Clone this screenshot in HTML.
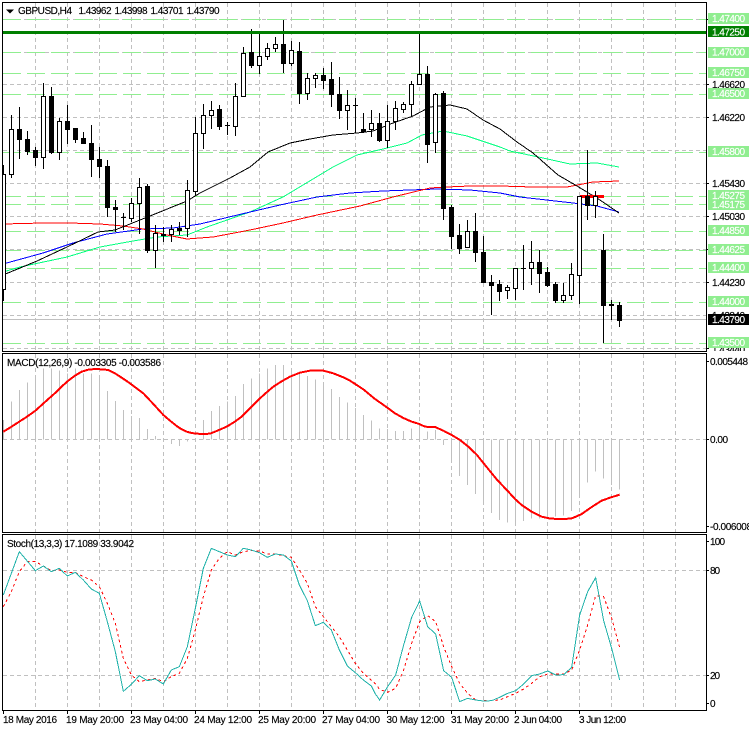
<!DOCTYPE html>
<html><head><meta charset="utf-8"><style>
html,body{margin:0;padding:0;background:#fff;width:749px;height:731px;overflow:hidden}
svg{display:block}
text{font-family:"Liberation Sans",sans-serif;font-size:10px;fill:#000;stroke:#000;stroke-width:.15px}
text.w{fill:#fff;stroke:#fff}
</style></head><body>
<svg width="749" height="731" viewBox="0 0 749 731" xmlns="http://www.w3.org/2000/svg">
<defs>
<clipPath id="m"><rect x="3" y="3" width="703" height="348"/></clipPath>
<clipPath id="ax"><rect x="707" y="3" width="42" height="348"/></clipPath>
</defs>
<rect width="749" height="731" fill="#fff"/>

<!-- grid -->
<g stroke="#c0c0c0" fill="none" stroke-dasharray="4 3" shape-rendering="crispEdges">
<path d="M35.5 3V351M67.5 3V351M99.5 3V351M131.5 3V351M163.5 3V351M195.5 3V351M227.5 3V351M259.5 3V351M291.5 3V351M323.5 3V351M355.5 3V351M387.5 3V351M419.5 3V351M451.5 3V351M483.5 3V351M515.5 3V351M547.5 3V351M579.5 3V351M611.5 3V351M643.5 3V351M675.5 3V351"/>
<path d="M35.5 354V532M67.5 354V532M99.5 354V532M131.5 354V532M163.5 354V532M195.5 354V532M227.5 354V532M259.5 354V532M291.5 354V532M323.5 354V532M355.5 354V532M387.5 354V532M419.5 354V532M451.5 354V532M483.5 354V532M515.5 354V532M547.5 354V532M579.5 354V532M611.5 354V532M643.5 354V532M675.5 354V532"/>
<path d="M35.5 535V710M67.5 535V710M99.5 535V710M131.5 535V710M163.5 535V710M195.5 535V710M227.5 535V710M259.5 535V710M291.5 535V710M323.5 535V710M355.5 535V710M387.5 535V710M419.5 535V710M451.5 535V710M483.5 535V710M515.5 535V710M547.5 535V710M579.5 535V710M611.5 535V710M643.5 535V710M675.5 535V710"/>
<path d="M3 19.5H706M3 52.5H706M3 84.5H706M3 117.5H706M3 150.5H706M3 183.5H706M3 216.5H706M3 249.5H706M3 282.5H706M3 315.5H706M3 348.5H706"/>
<path d="M3 439.5H706M3 570.5H706M3 675.5H706"/>
</g>

<g clip-path="url(#m)">
<!-- horizontal levels -->
<g stroke="#90ee90" fill="none" stroke-dasharray="18 6" shape-rendering="crispEdges">
<path d="M3 19.5H706M3 52.5H706M3 73.5H706M3 94.5H706M3 152.5H706M3 196.5H706M3 204.5H706M3 231.5H706M3 250.5H706M3 268.5H706M3 302.5H706M3 343.5H706"/>
</g>
<path d="M3 319.5H706" stroke="#c0c0c0" fill="none" shape-rendering="crispEdges"/>

<!-- moving averages -->
<g fill="none" shape-rendering="crispEdges">
<polyline stroke="#00ff7f" stroke-width="1" points="3,272 20,267 67,257 100,247 133,241 157,237 187,235 207,227 250,212 283,197 313,179 333,167 357,155 383,149 407,143 422,135 443,131 467,136 500,147 510,151 543,158 570,164 597,163 619,167"/>
<polyline stroke="#0000ff" stroke-width="1" points="3,264 43,253 73,243 107,234 143,229 173,228 200,224 250,212 280,205 317,197 350,193 383,191 437,189 470,190 500,193 520,197 573,203 597,206 619,212"/>
<polyline stroke="#ff0000" stroke-width="1" points="3,224 43,223 70,223 100,224 123,226 143,229 167,235 187,239 213,237 250,230 283,223 317,215 360,206 393,197 430,188 447,187 470,186 500,186 533,187 567,187 593,182 619,181"/>
<polyline stroke="#000" stroke-width="1" points="3,275 37,261 67,247 98,232 115,230 150,216 187,201 200,193 230,178 250,167 268,152 290,143 310,139 333,135 357,133 373,131 393,123 413,116 430,107 450,105 467,109 483,120 500,129 517,142 533,153 558,175 577,186 600,200 619,213"/>
<path d="M580 196.5H604" stroke="#ff0000" stroke-width="3"/>
</g>

<!-- candles: wicks -->
<path shape-rendering="crispEdges" stroke="#000" fill="none" d="M3.5 165V301M11.5 115V178M19.5 107V159M27.5 131V155M35.5 147V166M43.5 83V169M51.5 87V154M59.5 118V160M67.5 105V144M75.5 128V143M83.5 132V144M91.5 125V177M99.5 147V178M107.5 160V217M115.5 200V232M123.5 213V230M131.5 198V222M139.5 178V234M147.5 184V253M155.5 225V268M163.5 227V242M171.5 225V242M179.5 222V235M187.5 180V237M195.5 117V196M203.5 104V149M211.5 101V129M219.5 105V130M227.5 122V135M235.5 83V136M243.5 47V97M251.5 29V68M259.5 32V74M267.5 43V60M275.5 37V52M283.5 20V73M291.5 41V66M299.5 42V104M307.5 73V100M315.5 73V88M323.5 68V89M331.5 62V107M339.5 77V119M347.5 90V130M355.5 98V133M363.5 113V133M371.5 110V137M379.5 113V142M387.5 105V148M395.5 101V130M403.5 102V113M411.5 81V117M419.5 33V84M427.5 66V163M435.5 93V153M443.5 91V220M451.5 205V249M459.5 224V254M467.5 220V248M475.5 213V262M483.5 236V283M491.5 275V315M499.5 280V301M507.5 285V299M515.5 268V300M523.5 245V290M531.5 241V285M539.5 250V293M547.5 267V287M555.5 282V303M563.5 283V303M571.5 263V300M579.5 196V304M587.5 150V220M595.5 191V218M603.5 234V343M611.5 300V320M619.5 302V327"/>
<!-- white bodies -->
<path shape-rendering="crispEdges" stroke="#000" fill="#fff" d="M1.5 174.5h4v115h-4zM9.5 129.5h4v45h-4zM41.5 96.5h4v61h-4zM57.5 121.5h4v31h-4zM129.5 203.5h4v15h-4zM137.5 187.5h4v16h-4zM153.5 233.5h4v17h-4zM169.5 229.5h4v5h-4zM185.5 190.5h4v38h-4zM193.5 133.5h4v58h-4zM201.5 115.5h4v18h-4zM209.5 110.5h4v5h-4zM233.5 96.5h4v30h-4zM241.5 53.5h4v43h-4zM257.5 56.5h4v9h-4zM265.5 48.5h4v8h-4zM273.5 44.5h4v4h-4zM289.5 50.5h4v13h-4zM305.5 78.5h4v15h-4zM313.5 75.5h4v3h-4zM345.5 105.5h4v5h-4zM369.5 123.5h4v6h-4zM385.5 121.5h4v19h-4zM393.5 108.5h4v13h-4zM401.5 104.5h4v5h-4zM409.5 84.5h4v20h-4zM417.5 74.5h4v10h-4zM433.5 94.5h4v48h-4zM465.5 231.5h4v16h-4zM505.5 287.5h4v3h-4zM513.5 268.5h4v20h-4zM529.5 262.5h4v6h-4zM561.5 295.5h4v5h-4zM569.5 274.5h4v21h-4zM577.5 196.5h4v79h-4zM593.5 196.5h4v9h-4z"/>
<!-- black bodies -->
<path shape-rendering="crispEdges" fill="#000" d="M17 129h5v11h-5zM25 139h5v13h-5zM33 150h5v8h-5zM49 96h5v57h-5zM65 121h5v9h-5zM73 128h5v12h-5zM81 138h5v6h-5zM89 143h5v17h-5zM97 159h5v8h-5zM105 166h5v42h-5zM113 207h5v3h-5zM121 217h5v1h-5zM145 186h5v65h-5zM161 234h5v2h-5zM177 228h5v3h-5zM217 109h5v18h-5zM225 125h5v1h-5zM249 52h5v14h-5zM281 44h5v20h-5zM297 51h5v43h-5zM321 75h5v6h-5zM329 79h5v16h-5zM337 94h5v17h-5zM353 105h5v1h-5zM361 129h5v3h-5zM377 123h5v18h-5zM425 74h5v71h-5zM441 93h5v116h-5zM449 207h5v30h-5zM457 235h5v14h-5zM473 231h5v22h-5zM481 252h5v31h-5zM489 282h5v4h-5zM497 284h5v8h-5zM521 268h5v1h-5zM537 262h5v12h-5zM545 272h5v14h-5zM553 284h5v17h-5zM585 196h5v10h-5zM601 250h5v56h-5zM609 304h5v2h-5zM617 305h5v16h-5z"/>
<rect x="3" y="31" width="703" height="3" fill="#007f00"/>
</g>

<!-- MACD histogram + signal -->
<g transform="translate(0,350) scale(.33333)" fill="none" shape-rendering="crispEdges">
<path stroke="#c0c0c0" stroke-width="3" d="M10.5 268V210M34.5 268V155M58.5 268V120M82.5 268V98M106.5 268V75M130.5 268V55M154.5 268V55M178.5 268V62M202.5 268V70M226.5 268V55M250.5 268V70M274.5 268V70M298.5 268V85M322.5 268V123M346.5 268V153M370.5 268V180M394.5 268V198M418.5 268V204M442.5 268V237M466.5 268V258M490.5 268V265M514.5 268V282M538.5 268V288M562.5 268V275M586.5 268V266M610.5 268V210M634.5 268V183M658.5 268V168M682.5 268V155M706.5 268V138M730.5 268V102M754.5 268V85M778.5 268V70M802.5 268V55M826.5 268V45M850.5 268V45M874.5 268V63M898.5 268V72M922.5 268V78M946.5 268V88M970.5 268V100M994.5 268V117M1018.5 268V141M1042.5 268V158M1066.5 268V174M1090.5 268V195M1114.5 268V212"/>
<polyline stroke="#ff0000" stroke-width="6" points="10,245 30,233 50,220 78,202 105,183 125,165 145,147 170,125 188,107 205,92 225,77 245,65 265,59 285,57 305,58 325,60 345,70 368,85 390,100 410,115 430,130 460,162 490,195 510,212 530,228 545,238 560,245 575,249 590,251 610,252 630,251 650,243 680,230 703,216 725,200 750,175 780,145 800,127 820,110 845,94 870,80 900,68 930,62 950,61 970,62 1000,70 1030,82 1050,92 1090,118 1125,147"/>
</g>
<g transform="translate(375,350) scale(.33333)" fill="none" shape-rendering="crispEdges">
<path stroke="#c0c0c0" stroke-width="3" d="M13.5 268V235M37.5 268V237M61.5 268V243M85.5 268V243M109.5 268V235M133.5 268V222M157.5 268V245M181.5 268V240M205.5 268V285M229.5 268V330M253.5 268V378M277.5 268V405M301.5 268V432M325.5 268V460M349.5 268V489M373.5 268V510M397.5 268V518M421.5 268V518M445.5 268V513M469.5 268V505M493.5 268V505M517.5 268V505M541.5 268V500M565.5 268V497M589.5 268V483M613.5 268V440M637.5 268V398M661.5 268V365M685.5 268V386M709.5 268V405M733.5 268V418"/>
<polyline stroke="#ff0000" stroke-width="6" points="0,147 30,168 60,190 85,204 110,215 130,221 150,230 165,231 180,231 205,242 230,255 255,270 280,290 305,314 330,345 365,388 400,425 420,447 440,465 470,485 500,500 522,505 545,507 570,507 590,505 605,499 620,492 650,471 680,452 705,443 734,434"/>
</g>

<!-- Stochastic -->
<g transform="translate(0,530) scale(.33333)" fill="none" shape-rendering="crispEdges">
<polyline stroke="#ff0000" stroke-width="3" stroke-dasharray="8 9" points="10,230 34,185 58,125 82,95 106,95 130,108 154,122 178,120 202,127 226,127 250,140 274,150 298,170 322,220 346,280 370,385 394,435 418,455 442,450 466,445 490,455 514,440 538,430 562,385 586,300 610,200 634,120 658,85 682,65 706,75 730,65 754,62 778,63 802,72 826,72 850,77 874,82 898,120 922,160 946,230 970,260 994,290 1018,320 1042,360 1066,400 1090,430 1125,460 1139,478 1163,487 1187,475 1211,420 1235,340 1259,275 1283,257 1307,275 1331,350 1355,410 1379,460 1403,490 1427,510 1451,512 1475,512 1499,510 1523,500 1547,490 1571,477 1595,460 1619,440 1643,432 1667,432 1691,432 1715,420 1739,360 1763,285 1787,197 1811,200 1835,265 1859,352"/>
<polyline stroke="#20b2aa" stroke-width="3" points="10,195 58,65 106,122 130,108 154,125 178,115 202,138 226,127 250,150 274,177 298,190 322,275 346,365 370,484 394,463 418,437 442,452 466,447 490,462 514,420 538,410 562,350 586,235 610,115 634,55 658,65 682,75 706,80 730,55 754,60 778,68 802,82 826,72 850,75 874,93 898,165 922,212 946,287 970,277 994,300 1018,360 1042,408 1066,428 1090,450 1114,468 1125,490 1139,510 1163,470 1187,435 1211,345 1235,262 1259,213 1283,290 1307,312 1331,422 1355,442 1379,515 1403,505 1427,510 1451,513 1475,512 1499,502 1523,490 1547,482 1571,462 1595,437 1619,432 1643,423 1667,435 1691,434 1715,412 1739,255 1763,185 1787,143 1811,272 1835,355 1859,450"/>
</g>

<!-- panel borders -->
<g stroke="#000" fill="none" shape-rendering="crispEdges">
<path d="M2.5 2.5H706.5V351.5H2.5Z"/>
<path d="M2.5 353.5H706.5V532.5H2.5Z"/>
<path d="M2.5 534.5H706.5V710.5H2.5Z"/>
<path d="M706 19.5h3M706 84.5h3M706 117.5h3M706 183.5h3M706 216.5h3M706 249.5h3M706 282.5h3M706 348.5h3M706 361.5h3M706 439.5h3M706 526.5h3M706 541.5h3M706 570.5h3M706 675.5h3M706 703.5h3"/>
<path d="M3.5 710V714M67.5 710V714M131.5 710V714M195.5 710V714M259.5 710V714M323.5 710V714M387.5 710V714M451.5 710V714M515.5 710V714M579.5 710V714"/>
</g>

<!-- header -->
<path d="M6 9.5h8l-4 4z" fill="#000"/>
<text x="18" y="14" textLength="54">GBPUSD,H4</text>
<text x="78.5" y="14" textLength="33">1.43962</text>
<text x="114.5" y="14" textLength="33">1.43998</text>
<text x="150.5" y="14" textLength="33">1.43701</text>
<text x="186.5" y="14" textLength="33">1.43790</text>
<text x="7" y="366" textLength="154">MACD(12,26,9) -0.003305 -0.003586</text>
<text x="7" y="547" textLength="127">Stoch(13,3,3) 17.1089 33.9042</text>

<!-- right axis: plain prices -->
<g>
<text x="712" y="88" textLength="33">1.46620</text>
<text x="712" y="121" textLength="33">1.46220</text>
<text x="712" y="187" textLength="33">1.45430</text>
<text x="712" y="220" textLength="33">1.45030</text>
<text x="712" y="286" textLength="33">1.44230</text>
<text x="712" y="319" textLength="33">1.43840</text>
<text x="712" y="353" textLength="33" clip-path="url(#ax)">1.43440</text>
</g>
<!-- level boxes -->
<g fill="#90ee90" shape-rendering="crispEdges">
<rect x="708" y="13" width="41" height="11"/>
<rect x="708" y="47" width="41" height="11"/>
<rect x="708" y="67" width="41" height="11"/>
<rect x="708" y="88" width="41" height="11"/>
<rect x="708" y="146" width="41" height="11"/>
<rect x="708" y="190" width="41" height="11"/>
<rect x="708" y="199" width="41" height="11"/>
<rect x="708" y="225" width="41" height="11"/>
<rect x="708" y="244" width="41" height="11"/>
<rect x="708" y="262" width="41" height="11"/>
<rect x="708" y="296" width="41" height="11"/>
<rect x="708" y="337" width="41" height="11"/>
<rect x="708" y="26" width="41" height="11" fill="#007f00"/>
<rect x="708" y="314" width="41" height="11" fill="#000"/>
</g>
<g>
<text class="w" x="712" y="22" textLength="33">1.47400</text>
<text class="w" x="712" y="35.500" textLength="33">1.47250</text>
<text class="w" x="712" y="55.500" textLength="33">1.47000</text>
<text class="w" x="712" y="76" textLength="33">1.46750</text>
<text class="w" x="712" y="97" textLength="33">1.46500</text>
<text class="w" x="712" y="155" textLength="33">1.45800</text>
<text class="w" x="712" y="199" textLength="33">1.45275</text>
<text class="w" x="712" y="208" textLength="33">1.45175</text>
<text class="w" x="712" y="234" textLength="33">1.44850</text>
<text class="w" x="712" y="253" textLength="33">1.44625</text>
<text class="w" x="712" y="271" textLength="33">1.44400</text>
<text class="w" x="712" y="305" textLength="33">1.44000</text>
<text class="w" x="712" y="323" textLength="33">1.43790</text>
<text class="w" x="712" y="346" textLength="33">1.43500</text>
</g>
<!-- MACD / Stoch axis -->
<text x="710" y="365" textLength="38">0.005448</text>
<text x="710" y="443" textLength="18">0.00</text>
<text x="710" y="530" textLength="42">-0.006008</text>
<text x="710" y="545" textLength="15">100</text>
<text x="710" y="574" textLength="10">80</text>
<text x="710" y="679" textLength="10">20</text>
<text x="710" y="707">0</text>

<!-- time axis -->
<text x="3" y="723" textLength="54">18 May 2016</text>
<text x="66" y="723" textLength="58">19 May 20:00</text>
<text x="130" y="723" textLength="58">23 May 04:00</text>
<text x="194" y="723" textLength="58">24 May 12:00</text>
<text x="258" y="723" textLength="58">25 May 20:00</text>
<text x="322" y="723" textLength="58">27 May 04:00</text>
<text x="386.500" y="723" textLength="58">30 May 12:00</text>
<text x="451" y="723" textLength="58">31 May 20:00</text>
<text x="514" y="723" textLength="48">2 Jun 04:00</text>
<text x="579" y="723" textLength="47">3 Jun 12:00</text>
</svg>
</body></html>
